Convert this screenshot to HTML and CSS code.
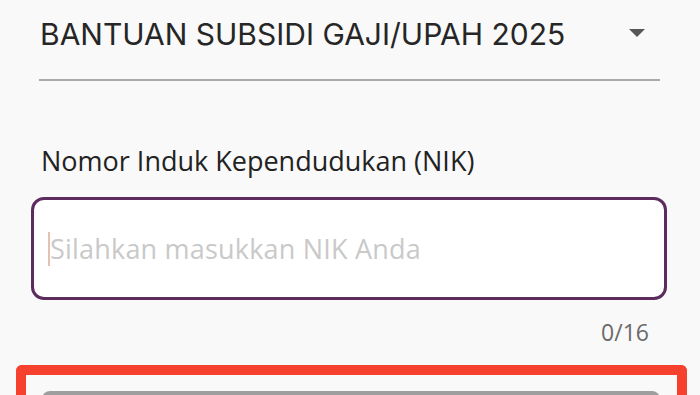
FILE: index.html
```html
<!DOCTYPE html>
<html lang="id">
<head>
    <meta charset="UTF-8">
    <meta name="viewport" content="width=device-width, initial-scale=1.0">
    <link rel="stylesheet" href="styles.css">
    <title>Cek Status BSU</title>
</head>
<body>
    <div class="form">
        <div class="select">
            <span class="select-value">BANTUAN SUBSIDI GAJI/UPAH 2025</span>
            <span class="select-arrow"></span>
        </div>

        <div class="field">
            <label class="field-label" for="nikInput">Nomor Induk Kependudukan (NIK)</label>
            <div class="field-box">
                <span class="caret"></span>
                <input type="text" id="nikInput" class="field-input" placeholder="Silahkan masukkan NIK Anda" maxlength="16">
            </div>
            <div class="field-counter">0/16</div>
        </div>

        <div class="highlight">
            <button class="submit-btn" aria-label="Cek Status"></button>
        </div>
    </div>
</body>
</html>
```

FILE: styles.css
```css
body {
    margin: 0;
    padding: 0;
    background-color: #f9f9f9;
    font-family: "Open Sans", Lato, sans-serif;
    overflow: hidden;
}

.form {
    padding-top: 16px;
}

.select {
    display: flex;
    justify-content: space-between;
    align-items: flex-start;
    margin: 0 40px 0 39px;
    padding: 0 15px 27px 1px;
    border-bottom: 2px solid #a9a9a9;
}

.select-value {
    font-family: Inter, Roboto, sans-serif;
    font-size: 30px;
    line-height: 36px;
    color: #262626;
}

.select-arrow {
    margin-top: 13px;
    width: 0;
    height: 0;
    border-left: 8px solid transparent;
    border-right: 8px solid transparent;
    border-top: 8px solid #575757;
}

.field {
    margin-top: 64px;
}

.field-label {
    display: block;
    margin-left: 41px;
    font-size: 27px;
    line-height: 32px;
    color: #222;
}

.field-box {
    display: flex;
    align-items: center;
    margin: 20px 33px 0 31px;
    height: 97px;
    padding: 0 14px;
    background-color: #fff;
    border: 3px solid #5b2c5d;
    border-radius: 13px;
}

.caret {
    width: 2px;
    height: 34px;
    background-color: #e3c2b4;
}

.field-input {
    flex: 1;
    border: none;
    outline: none;
    background: transparent;
    padding: 0;
    font-family: "Open Sans", sans-serif;
    font-size: 27px;
    letter-spacing: 0.2px;
    color: #333;
}

.field-input::placeholder {
    color: #c9c9c9;
}

.field-counter {
    margin: 18px 51px 0 0;
    text-align: right;
    font-size: 23px;
    line-height: 28px;
    color: #6a6a6a;
}

.highlight {
    margin: 19px 13px 0 16px;
    padding: 16px 17px 40px 16px;
    border: 10px solid #f7412f;
    border-bottom: none;
    border-radius: 6px 6px 0 0;
}

.submit-btn {
    display: block;
    width: 100%;
    height: 60px;
    border: none;
    border-radius: 8px;
    background-color: #9e9e9e;
}
```
